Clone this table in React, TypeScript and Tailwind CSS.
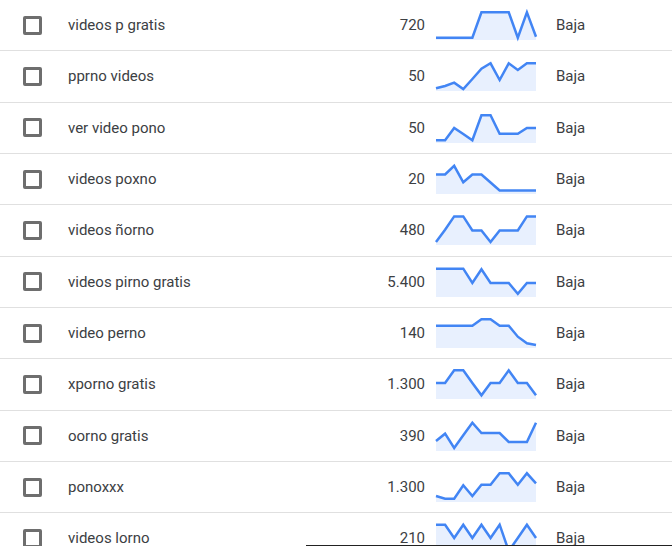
const rows: { kw: string; vol: string; pts: number[] }[] = [
  { kw: 'videos p gratis', vol: '720', pts: [37.7, 37.7, 37.7, 37.7, 37.7, 12.3, 12.3, 12.3, 12.3, 37.7, 12.3, 36.7] },
  { kw: 'pprno videos', vol: '50', pts: [37.3, 35, 31.7, 38, 28, 17.7, 12.3, 29, 12.3, 19, 12.3, 12.3] },
  { kw: 'ver video pono', vol: '50', pts: [37.3, 37.3, 25, 31, 37.3, 12.3, 12.3, 30.7, 30.7, 30.7, 25, 25] },
  { kw: 'videos poxno', vol: '20', pts: [20.5, 20.5, 11.8, 28.3, 20.5, 20.5, 28.5, 36.5, 36.5, 36.5, 36.5, 36.5] },
  { kw: 'videos ñorno', vol: '480', pts: [37, 24.7, 11.4, 11.4, 25.4, 25.4, 37, 25.4, 25.4, 25.4, 11.4, 11.4] },
  { kw: 'videos pirno gratis', vol: '5.400', pts: [11.7, 11.7, 11.7, 11.7, 26, 12.3, 26, 26, 26, 36.7, 26, 26] },
  { kw: 'video perno', vol: '140', pts: [17.7, 17.7, 17.7, 17.7, 17.7, 11.3, 11.3, 17.7, 17.7, 28.7, 35.3, 37] },
  { kw: 'xporno gratis', vol: '1.300', pts: [24, 24, 11.3, 11.3, 24, 36.3, 24, 24, 11.3, 24, 24, 36.3] },
  { kw: 'oorno gratis', vol: '390', pts: [30, 22.7, 37, 24.3, 11.7, 22, 22, 22, 31, 31, 31, 11.7] },
  { kw: 'ponoxxx', vol: '1.300', pts: [34, 36.7, 36.7, 23.3, 34, 22.7, 22.7, 11.3, 11.3, 22.7, 11.3, 21.3] },
  { kw: 'videos lorno', vol: '210', pts: [11.7, 11.7, 25, 11.7, 25, 11.7, 25, 11.7, 38, 25, 11.7, 25] },
];

function Spark({ pts }: { pts: number[] }) {
  // pts are y offsets from the row top; chart box starts at y=10
  const top = 10;
  const step = 100 / (pts.length - 1);
  const coords = pts.map((y, i) => `${(i * step).toFixed(2)},${(y - top).toFixed(2)}`);
  const line = coords.join(' ');
  const area = `0,30 ${line} 100,30`;
  return (
    <svg width="100" height="30" viewBox="0 0 100 30" className="block overflow-visible">
      <polygon points={area} fill="#e8f0fe" />
      <polyline points={line} fill="none" stroke="#4285f4" strokeWidth="2.5" strokeLinejoin="miter" strokeLinecap="butt" />
    </svg>
  );
}

export default function App() {
  return (
    <div className="relative w-[672px] h-[546px] overflow-hidden bg-white" style={{ fontFamily: 'Roboto, "Liberation Sans", sans-serif' }}>
      {rows.map((r) => (
        <div key={r.kw} className="flex h-[51.33px] border-b border-[#e0e0e0] text-[15px] text-[#3c4043]">
          <div className="w-[68px] pl-[23px] flex items-center">
            <div className="w-[19px] h-[19px] border-[3px] border-[#6e6e6e] rounded-[2px]" />
          </div>
          <div className="w-[257px] flex items-center">{r.kw}</div>
          <div className="w-[100px] flex items-center justify-end">{r.vol}</div>
          <div className="w-[100px] ml-[11px] pt-[10px]">
            <Spark pts={r.pts} />
          </div>
          <div className="pl-[20px] flex items-center">Baja</div>
        </div>
      ))}
      <div className="absolute bottom-0 left-[306px] right-0 h-px bg-[#222]" />
    </div>
  );
}
